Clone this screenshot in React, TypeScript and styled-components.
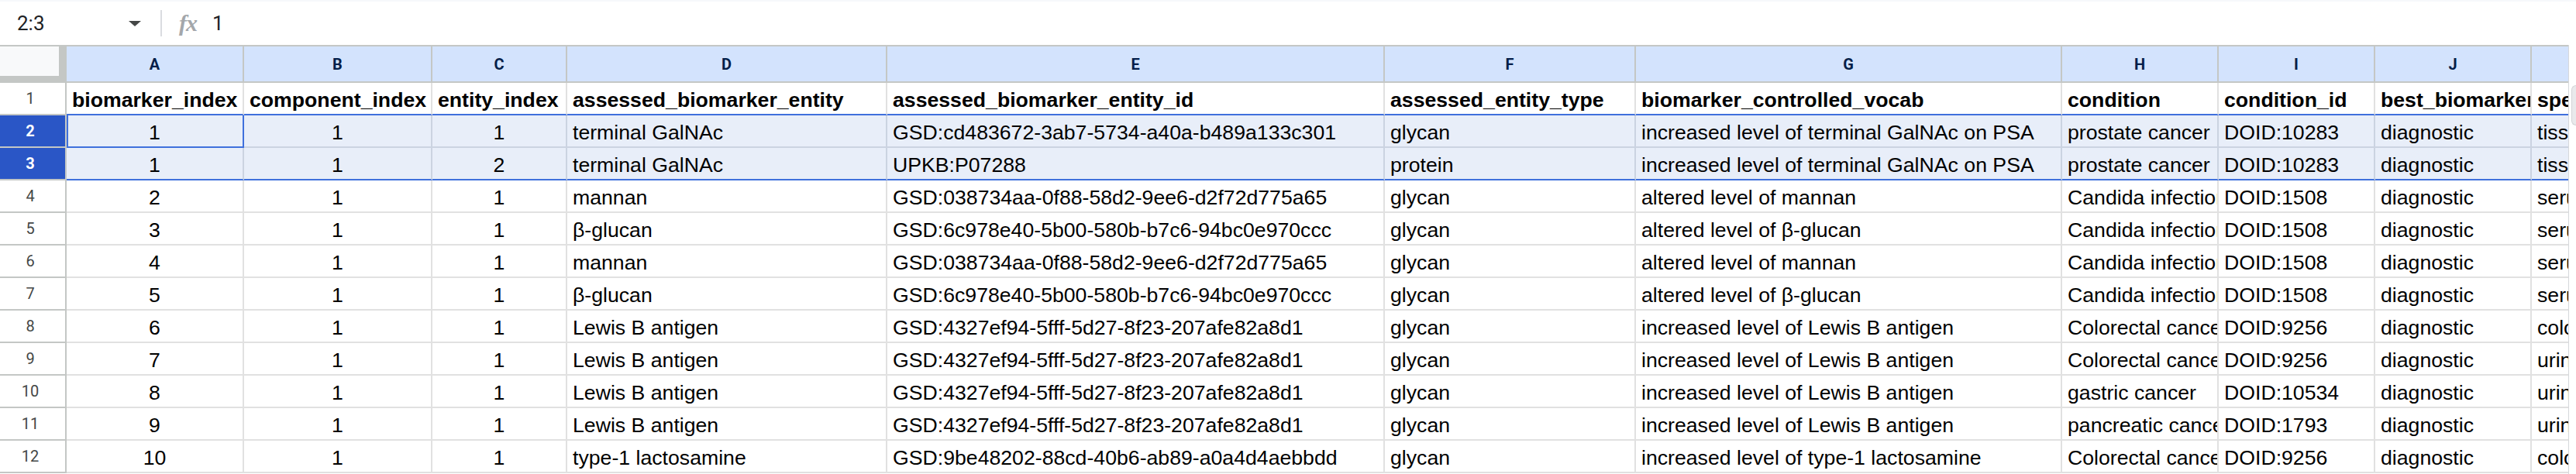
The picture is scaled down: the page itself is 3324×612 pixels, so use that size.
import React from 'react';
import styled, { createGlobalStyle, css } from 'styled-components';

const GlobalStyle = createGlobalStyle`
  html, body {
    margin: 0;
    padding: 0;
    background: #fff;
  }
  body {
    width: 3324px;
    height: 612px;
    overflow: hidden;
    font-family: "Liberation Sans", Arial, sans-serif;
  }
`;

const GRID = '#e1e1e1';
const GRID_SEL = '#cbd3e1';
const HEAD_LINE = '#c4c7c5';
const BLUE = '#3f70dc';

const Page = styled.div`
  display: flex;
  flex-direction: column;
  width: 3324px;
  height: 612px;
  overflow: hidden;
  background: #fff;
`;

/* ---------- formula bar ---------- */

const FormulaBar = styled.div`
  display: flex;
  align-items: center;
  flex-shrink: 0;
  height: 58px;
  box-sizing: border-box;
  border-top: 2px solid #f6f8fb;
  font-family: Roboto, "Liberation Sans", sans-serif;
  color: #202124;
`;

const NameBox = styled.div`
  display: flex;
  align-items: center;
  justify-content: space-between;
  width: 207px;
  box-sizing: border-box;
  padding: 0 25px 0 22px;
  font-size: 26px;
`;

const DropArrow = styled.span`
  width: 0;
  height: 0;
  border-left: 8px solid transparent;
  border-right: 8px solid transparent;
  border-top: 7px solid #444746;
`;

const Divider = styled.div`
  width: 2px;
  height: 34px;
  background: #dadce0;
`;

const FxLabel = styled.span`
  margin-left: 22px;
  font-family: "Liberation Serif", "DejaVu Serif", serif;
  font-style: italic;
  font-weight: 700;
  font-size: 30px;
  color: #a3a7ab;
  letter-spacing: -1px;
`;

const FormulaValue = styled.span`
  margin-left: 20px;
  font-size: 26px;
`;

/* ---------- sheet ---------- */

const SheetArea = styled.div`
  display: flex;
  flex: 1;
  min-height: 0;
`;

const Viewport = styled.div`
  display: flex;
  flex-direction: column;
  flex: 1;
  overflow: hidden;
`;

const ScrollTrack = styled.div`
  width: 10px;
  flex-shrink: 0;
  box-sizing: border-box;
  border-left: 1px solid #d6d8db;
  padding-top: 52px;
  background: #fff;
`;

const ScrollThumb = styled.div`
  height: 50px;
  margin-left: 3px;
  border: 1px solid #d2d4d7;
  border-right: none;
  border-radius: 7px 0 0 7px;
  background: #e9eaec;
`;

const Row = styled.div<{ $head?: boolean }>`
  display: flex;
  flex-shrink: 0;
  height: ${p => (p.$head ? 49 : 42)}px;
`;

const Corner = styled.div`
  width: 86px;
  flex-shrink: 0;
  box-sizing: border-box;
  border-top: 2px solid ${HEAD_LINE};
  background: ${HEAD_LINE};
`;

const CornerFace = styled.div`
  width: 76px;
  height: 38px;
  background: #f8f9fa;
`;

const ColHead = styled.div<{ $w: number }>`
  width: ${p => p.$w}px;
  flex-shrink: 0;
  box-sizing: border-box;
  display: flex;
  align-items: center;
  justify-content: center;
  border-top: 2px solid ${HEAD_LINE};
  border-right: 2px solid ${HEAD_LINE};
  border-bottom: 2px solid ${HEAD_LINE};
  background: #d3e3fd;
  font-family: Roboto, "Liberation Sans", sans-serif;
  font-weight: 700;
  font-size: 20px;
  color: #041e49;
`;

const RowHead = styled.div<{ $sel?: boolean }>`
  width: 86px;
  flex-shrink: 0;
  box-sizing: border-box;
  display: flex;
  align-items: center;
  justify-content: center;
  padding-right: 6px;
  border-right: 2px solid ${HEAD_LINE};
  border-bottom: 2px solid ${HEAD_LINE};
  font-family: Roboto, "Liberation Sans", sans-serif;
  font-size: 20px;
  color: #444746;
  background: #fff;
  ${p =>
    p.$sel &&
    css`
      background: #2a56c6;
      color: #fff;
      font-weight: 700;
    `}
`;

type CellProps = {
  $w: number;
  $center?: boolean;
  $bold?: boolean;
  $sel?: boolean;
  $edge?: boolean;
  $active?: boolean;
};

const Cell = styled.div<CellProps>`
  width: ${p => p.$w}px;
  flex-shrink: 0;
  box-sizing: border-box;
  display: flex;
  align-items: flex-end;
  justify-content: ${p => (p.$center ? 'center' : 'flex-start')};
  padding: 0 7px 2px;
  overflow: hidden;
  white-space: nowrap;
  font-size: 26.67px;
  font-weight: ${p => (p.$bold ? 700 : 400)};
  color: #000;
  background: ${p => (p.$sel ? '#e8eef9' : '#fff')};
  border-right: 2px solid ${p => (p.$sel ? GRID_SEL : GRID)};
  border-bottom: 2px solid ${p => (p.$edge ? BLUE : p.$sel ? GRID_SEL : GRID)};
  ${p =>
    p.$active &&
    css`
      border-right-color: ${BLUE};
      border-bottom-color: ${BLUE};
      box-shadow: inset 2px 0 0 ${BLUE};
    `}
`;

/* ---------- data ---------- */

const columns = [
  { key: 'A', w: 229, center: true },
  { key: 'B', w: 243, center: true },
  { key: 'C', w: 174, center: true },
  { key: 'D', w: 413 },
  { key: 'E', w: 642 },
  { key: 'F', w: 324 },
  { key: 'G', w: 550 },
  { key: 'H', w: 202 },
  { key: 'I', w: 202 },
  { key: 'J', w: 202 },
  { key: 'K', w: 202 },
];

const header = [
  'biomarker_index',
  'component_index',
  'entity_index',
  'assessed_biomarker_entity',
  'assessed_biomarker_entity_id',
  'assessed_entity_type',
  'biomarker_controlled_vocab',
  'condition',
  'condition_id',
  'best_biomarker_role',
  'specimen',
];

const lewisId = 'GSD:4327ef94-5fff-5d27-8f23-207afe82a8d1';
const mannanId = 'GSD:038734aa-0f88-58d2-9ee6-d2f72d775a65';
const glucanId = 'GSD:6c978e40-5b00-580b-b7c6-94bc0e970ccc';

const rows: string[][] = [
  ['1', '1', '1', 'terminal GalNAc', 'GSD:cd483672-3ab7-5734-a40a-b489a133c301', 'glycan', 'increased level of terminal GalNAc on PSA', 'prostate cancer', 'DOID:10283', 'diagnostic', 'tissue'],
  ['1', '1', '2', 'terminal GalNAc', 'UPKB:P07288', 'protein', 'increased level of terminal GalNAc on PSA', 'prostate cancer', 'DOID:10283', 'diagnostic', 'tissue'],
  ['2', '1', '1', 'mannan', mannanId, 'glycan', 'altered level of mannan', 'Candida infection', 'DOID:1508', 'diagnostic', 'serum'],
  ['3', '1', '1', 'β-glucan', glucanId, 'glycan', 'altered level of β-glucan', 'Candida infection', 'DOID:1508', 'diagnostic', 'serum'],
  ['4', '1', '1', 'mannan', mannanId, 'glycan', 'altered level of mannan', 'Candida infection', 'DOID:1508', 'diagnostic', 'serum'],
  ['5', '1', '1', 'β-glucan', glucanId, 'glycan', 'altered level of β-glucan', 'Candida infection', 'DOID:1508', 'diagnostic', 'serum'],
  ['6', '1', '1', 'Lewis B antigen', lewisId, 'glycan', 'increased level of Lewis B antigen', 'Colorectal cancer', 'DOID:9256', 'diagnostic', 'colon'],
  ['7', '1', '1', 'Lewis B antigen', lewisId, 'glycan', 'increased level of Lewis B antigen', 'Colorectal cancer', 'DOID:9256', 'diagnostic', 'urine'],
  ['8', '1', '1', 'Lewis B antigen', lewisId, 'glycan', 'increased level of Lewis B antigen', 'gastric cancer', 'DOID:10534', 'diagnostic', 'urine'],
  ['9', '1', '1', 'Lewis B antigen', lewisId, 'glycan', 'increased level of Lewis B antigen', 'pancreatic cancer', 'DOID:1793', 'diagnostic', 'urine'],
  ['10', '1', '1', 'type-1 lactosamine', 'GSD:9be48202-88cd-40b6-ab89-a0a4d4aebbdd', 'glycan', 'increased level of type-1 lactosamine', 'Colorectal cancer', 'DOID:9256', 'diagnostic', 'colon'],
];

// rows 2-3 are selected, A2 is the active cell
const selectedRows = [2, 3];

const App: React.FC = () => {
  return (
    <Page>
      <GlobalStyle />
      <FormulaBar>
        <NameBox>
          <span>2:3</span>
          <DropArrow />
        </NameBox>
        <Divider />
        <FxLabel>fx</FxLabel>
        <FormulaValue>1</FormulaValue>
      </FormulaBar>

      <SheetArea>
        <Viewport>
          <Row $head>
            <Corner>
              <CornerFace />
            </Corner>
            {columns.map(c => (
              <ColHead key={c.key} $w={c.w}>
                {c.key === 'K' ? '' : c.key}
              </ColHead>
            ))}
          </Row>

          <Row>
            <RowHead>1</RowHead>
            {header.map((h, i) => (
              <Cell key={h} $w={columns[i].w} $bold $edge>
                {h}
              </Cell>
            ))}
          </Row>

          {rows.map((r, ri) => {
            const n = ri + 2;
            const sel = selectedRows.includes(n);
            const lastSel = n === selectedRows[selectedRows.length - 1];
            return (
              <Row key={n}>
                <RowHead $sel={sel}>{n}</RowHead>
                {r.map((v, ci) => (
                  <Cell
                    key={ci}
                    $w={columns[ci].w}
                    $center={columns[ci].center}
                    $sel={sel}
                    $edge={lastSel}
                    $active={n === 2 && ci === 0}
                  >
                    {v}
                  </Cell>
                ))}
              </Row>
            );
          })}
        </Viewport>
        <ScrollTrack>
          <ScrollThumb />
        </ScrollTrack>
      </SheetArea>
    </Page>
  );
};

export default App;
